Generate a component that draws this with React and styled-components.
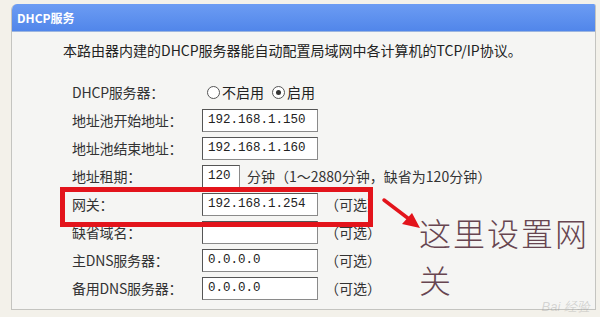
import React from 'react'
import styled, { createGlobalStyle } from 'styled-components'

const GlobalStyle = createGlobalStyle`
    html, body {
        margin: 0;
        padding: 0;
        background: #f3f1ea;
    }
    * {
        box-sizing: border-box;
    }
`;

const Frame = styled.div`
    position: relative;
    width: 600px;
    height: 317px;
    overflow: hidden;
    padding: 4px 4px 0 11px;
    font-family: "Noto Sans CJK SC", "DejaVu Sans", sans-serif;
    color: #222;
`;

const Panel = styled.div`
    height: 306px;
    background: #f5f5f3;
    border-left: 1px solid #c4c4c0;
    border-right: 1px solid #c4c4c0;
    border-bottom: 1px solid #c4c4c0;
    border-radius: 6px 2px 0 0;
    overflow: hidden;
`;

const Header = styled.div`
    height: 28px;
    padding-left: 5px;
    line-height: 28px;
    font-size: 12px;
    font-weight: bold;
    color: #ffffff;
    background: linear-gradient(#6c9cf3, #5186ea);
    border-bottom: 1px solid #9cb5df;
`;

const Description = styled.p`
    margin: 9px 0 0 51px;
    font-size: 14px;
    line-height: 18px;
    white-space: nowrap;
`;

const Form = styled.div`
    margin-top: 19px;
    padding-left: 60px;
    display: flex;
    flex-direction: column;
`;

const Row = styled.div`
    height: 28px;
    display: grid;
    grid-template-columns: 130px auto;
    align-items: center;
    font-size: 14px;
`;

const Label = styled.span`
    color: #333;
    letter-spacing: -0.2px;
`;

const Field = styled.div`
    display: flex;
    align-items: center;
    gap: 7px;
`;

const Input = styled.div`
    width: ${({ $short }) => ($short ? '38px' : '116px')};
    height: 23px;
    padding-left: 5px;
    background: #ffffff;
    border: 1px solid #8a8a8a;
    border-top-color: #555;
    border-left-color: #555;
    font-family: "Liberation Mono", "DejaVu Sans Mono", monospace;
    font-size: 12.5px;
    line-height: 21px;
    color: #222;
`;

const Note = styled.span`
    font-size: 14px;
    white-space: nowrap;
    color: #333;
`;

const RadioGroup = styled.div`
    display: flex;
    align-items: center;
    gap: 8px;
    padding-left: 5px;
`;

const RadioItem = styled.label`
    display: flex;
    align-items: center;
    gap: 2px;
    font-size: 14px;
    color: #222;
`;

const Radio = styled.span`
    width: 13px;
    height: 13px;
    border: 1px solid #555;
    border-radius: 50%;
    display: inline-flex;
    align-items: center;
    justify-content: center;
    background: #fff;

    &::after {
        content: '';
        width: 5px;
        height: 5px;
        border-radius: 50%;
        background: ${({ $checked }) => ($checked ? '#333' : 'transparent')};
    }
`;

const Highlight = styled.div`
    position: absolute;
    left: 60px;
    top: 187px;
    width: 313px;
    height: 40px;
    border: 5px solid #e3141b;
`;

const Arrow = styled.svg`
    position: absolute;
    left: 381px;
    top: 197px;
`;

const Annotation = styled.div`
    position: absolute;
    left: 419px;
    top: 209px;
    width: max-content;
    font-size: 32px;
    letter-spacing: 2px;
    font-weight: 300;
    line-height: 47px;
    color: #674550;
`;

const Watermark = styled.div`
    position: absolute;
    right: 10px;
    bottom: 1px;
    font-family: "Liberation Sans", sans-serif;
    font-size: 13px;
    font-style: italic;
    color: rgba(150, 150, 150, 0.35);
`;

const rows = [
    { label: '地址池开始地址：', value: '192.168.1.150' },
    { label: '地址池结束地址：', value: '192.168.1.160' },
    { label: '地址租期：', value: '120', short: true, note: '分钟（1～2880分钟，缺省为120分钟）' },
    { label: '网关：', value: '192.168.1.254', note: '（可选）' },
    { label: '缺省域名：', value: '', note: '（可选）' },
    { label: '主DNS服务器：', value: '0.0.0.0', note: '（可选）' },
    { label: '备用DNS服务器：', value: '0.0.0.0', note: '（可选）' },
];

export default function App() {
    return (
        <Frame>
            <GlobalStyle />
            <Panel>
                <Header>DHCP服务</Header>
                <Description>本路由器内建的DHCP服务器能自动配置局域网中各计算机的TCP/IP协议。</Description>
                <Form>
                    <Row>
                        <Label>DHCP服务器：</Label>
                        <RadioGroup>
                            <RadioItem><Radio />不启用</RadioItem>
                            <RadioItem><Radio $checked />启用</RadioItem>
                        </RadioGroup>
                    </Row>
                    {rows.map((r) => (
                        <Row key={r.label}>
                            <Label>{r.label}</Label>
                            <Field>
                                <Input $short={r.short}>{r.value}</Input>
                                {r.note && <Note>{r.note}</Note>}
                            </Field>
                        </Row>
                    ))}
                </Form>
            </Panel>

            <Highlight />
            <Arrow width="42" height="34" viewBox="0 0 42 34">
                <line x1="3" y1="3" x2="28" y2="22" stroke="#e3141b" strokeWidth="3.5" strokeLinecap="round" />
                <polygon points="39,31 21,27 31,16" fill="#e3141b" />
            </Arrow>
            <Annotation>这里设置网<br />关</Annotation>
            <Watermark>Bai 经验</Watermark>
        </Frame>
    );
}
